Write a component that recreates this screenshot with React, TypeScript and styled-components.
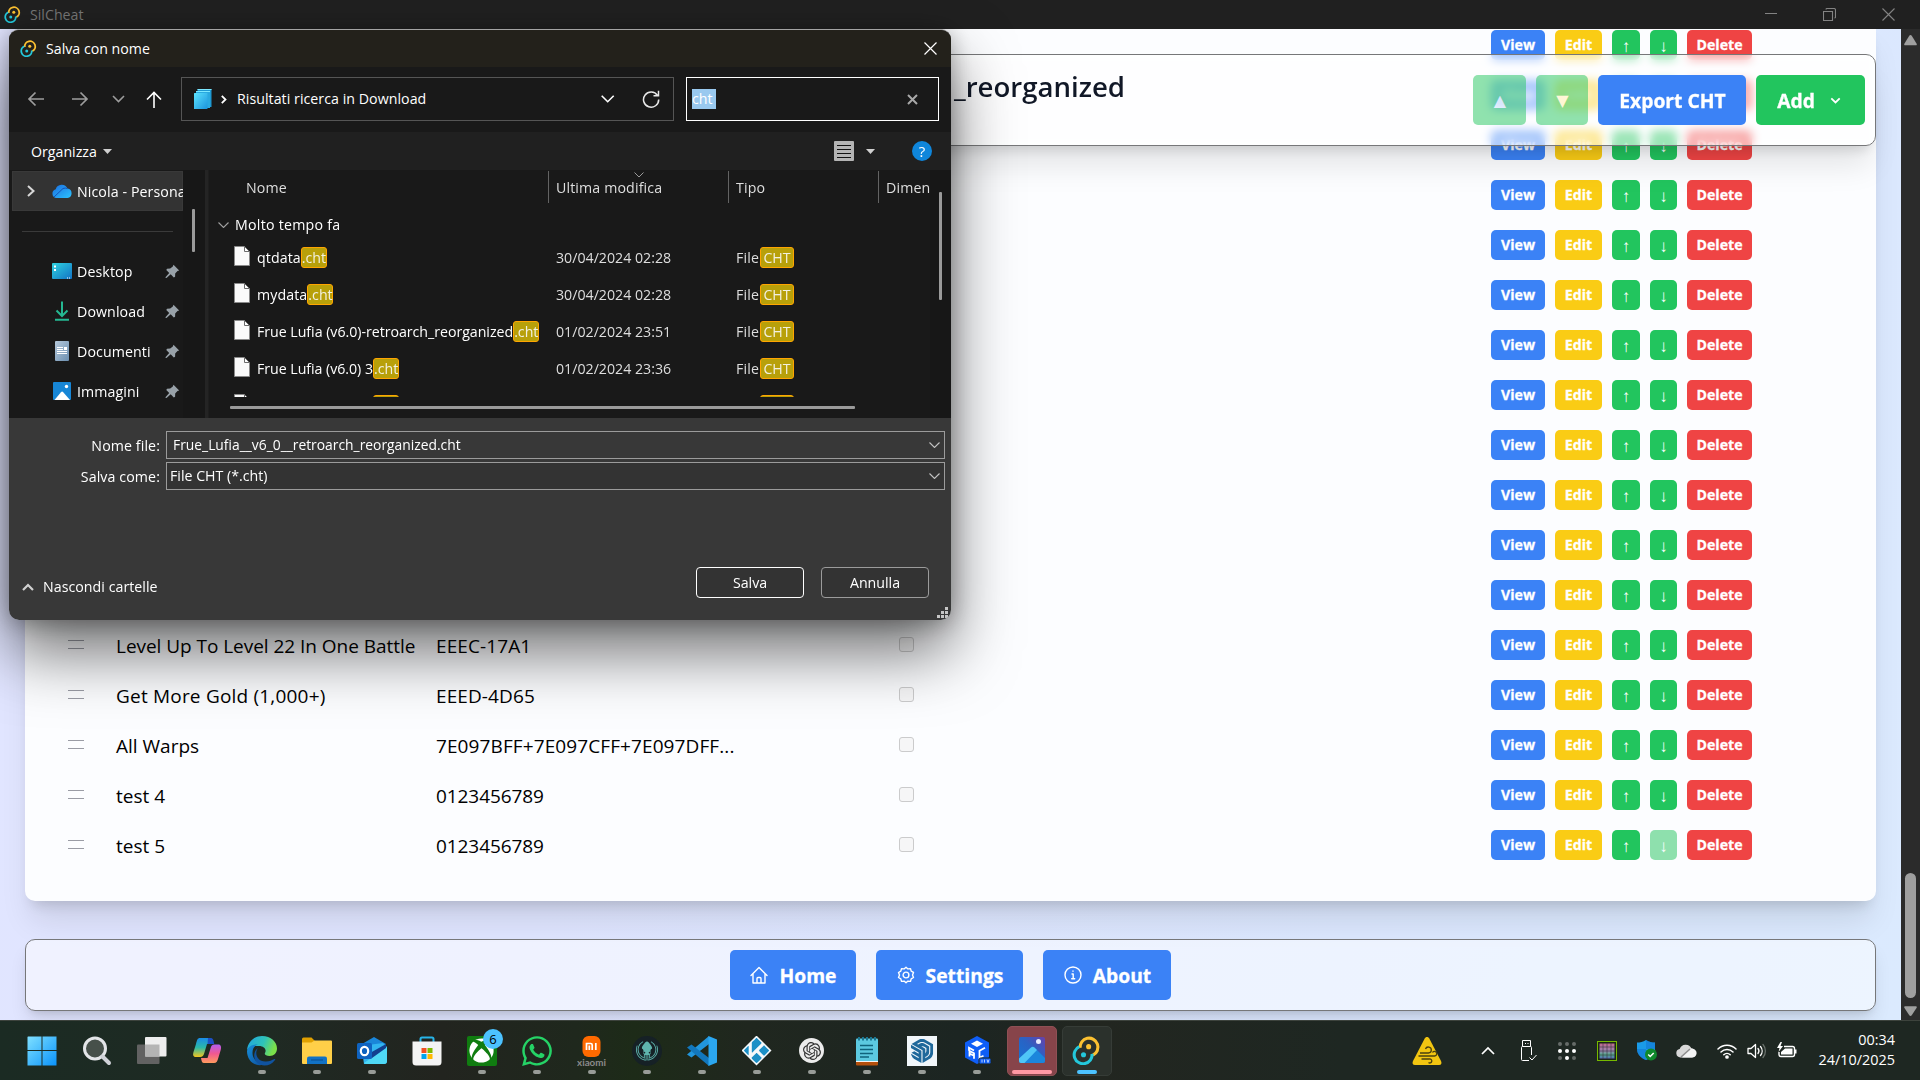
import React from 'react';
import styled, { createGlobalStyle, css } from 'styled-components';
import { SiOpenai, SiSketchup, SiKodi, SiGitkraken } from 'react-icons/si';
import { FaXbox, FaWhatsapp } from 'react-icons/fa';

const GlobalStyle = createGlobalStyle`
  *, *::before, *::after { box-sizing: border-box; }
  html, body { margin: 0; padding: 0; overflow: hidden; }
  body { font-family: "Open Sans", "Noto Sans", sans-serif; }
  svg { display: block; flex: none; }
`;

/* ---------- shell ---------- */

const Screen = styled.div`
  position: relative;
  width: 1920px;
  height: 1080px;
  display: flex;
  flex-direction: column;
  overflow: hidden;
  background: #202020;
`;

const WindowBar = styled.header`
  height: 29px;
  flex: none;
  display: flex;
  align-items: center;
  padding: 0 25px 0 4px;
  background: #202020;
  color: #767676;
  font-size: 14.2px;
`;

const AppName = styled.span`
  margin-left: 9px;
  line-height: 20px;
  flex: 1;
`;

const WindowControls = styled.div`
  display: flex;
  gap: 46px;
`;

const Body = styled.div`
  height: 991px;
  flex: none;
  display: flex;
`;

const Page = styled.main`
  position: relative;
  width: 1901px;
  overflow: hidden;
  display: flex;
  flex-direction: column;
  padding: 0 25px;
  background: linear-gradient(115deg, #e2e5ff 0%, #dfe5ff 40%, #dbe7fe 75%, #dbeafe 100%);
`;

const ScrollTrack = styled.div`
  width: 19px;
  display: flex;
  flex-direction: column;
  align-items: center;
  justify-content: space-between;
  padding: 6px 0 4px;
  background: #2b2b2b;
`;

const ScrollThumb = styled.div`
  width: 11px;
  height: 125px;
  margin-top: auto;
  margin-bottom: 8px;
  border-radius: 6px;
  background: #9f9f9f;
`;

/* ---------- cheats card ---------- */

const Card = styled.section`
  height: 881px;
  flex: none;
  margin-top: -9px;
  border-radius: 10px;
  background: #fcfdff;
  box-shadow: 0 25px 31px -6px rgba(0, 0, 0, 0.1), 0 10px 13px -7px rgba(0, 0, 0, 0.14);
`;

const CheatRow = styled.div`
  height: 50px;
  display: grid;
  grid-template-columns: 91px 320px 463px 592px 300px;
  align-items: center;
  color: #000;
  font-size: 19px;
  white-space: nowrap;
`;

const CheatText = styled.span<{ $ls?: number }>`
  letter-spacing: ${(p) => p.$ls ?? 0}px;
  padding-top: 1px;
`;

const Handle = styled.span`
  display: block;
  width: 16px;
  height: 9px;
  margin: 0 0 1px 43px;
  border-top: 1px solid #9a9ca5;
  border-bottom: 1px solid #9a9ca5;
`;

const CheckBox = styled.span`
  display: block;
  width: 15px;
  height: 15px;
  margin-bottom: 1px;
  border: 1px solid #cbcbcc;
  border-radius: 3px;
  background: #f6f6f7;
`;

const RowActions = styled.div`
  display: flex;
  gap: 10px;
`;

const tones = { blue: '#3b82f6', yellow: '#facc15', green: '#22c55e', red: '#ef4444' };

const SmallButton = styled.button<{ $tone: keyof typeof tones; $w: number; $off?: boolean }>`
  width: ${(p) => p.$w}px;
  height: 30px;
  padding: 0;
  border: 0;
  border-radius: 5px;
  background: ${(p) => tones[p.$tone]};
  opacity: ${(p) => (p.$off ? 0.5 : 1)};
  color: #fff;
  font: 700 14.2px "Open Sans", "Noto Sans", sans-serif;
  line-height: 30px;
  text-align: center;
  -webkit-text-stroke: 0.3px #fff;
`;

const MoveArrow = styled.span`
  display: block;
  font-size: 17px;
  line-height: 29px;
  font-weight: 400;
  -webkit-text-stroke: 0;
`;

const PageHeader = styled.header`
  position: absolute;
  left: 25px;
  top: 25px;
  width: 1851px;
  height: 92px;
  display: flex;
  justify-content: flex-end;
  padding: 9px 10px;
  border: 1px solid #767779;
  border-radius: 10px;
  background: rgba(255, 255, 255, 0.55);
  backdrop-filter: blur(5px);
  box-shadow: 0 25px 31px -6px rgba(0, 0, 0, 0.1), 0 10px 13px -7px rgba(0, 0, 0, 0.14);
`;

const PageTitle = styled.h1`
  margin: 2px 348px 0 0;
  color: #111827;
  font-size: 27.6px;
  font-weight: 600;
  line-height: 40px;
`;

const HeaderActions = styled.div`
  display: flex;
  gap: 10px;
  margin-top: 11px;
`;

const BigButton = styled.button<{ $tone: keyof typeof tones; $w: number; $off?: boolean; $pr?: number }>`
  width: ${(p) => p.$w}px;
  height: 50px;
  padding: 0 ${(p) => p.$pr ?? 0}px 0 1px;
  border: 0;
  border-radius: 5px;
  display: flex;
  align-items: center;
  justify-content: center;
  background: ${(p) => tones[p.$tone]};
  opacity: ${(p) => (p.$off ? 0.5 : 1)};
  color: #fff;
  font: 700 19.3px "Open Sans", "Noto Sans", sans-serif;
`;

const ArrowGlyph = styled.span`
  font: 16px "DejaVu Sans", sans-serif;
`;

const Label = styled.span<{ $ml?: number; $mr?: number }>`
  line-height: 28px;
  padding-top: 2px;
  margin-left: ${(p) => p.$ml ?? 0}px;
  margin-right: ${(p) => p.$mr ?? 0}px;
  -webkit-text-stroke: 0.3px #fff;
`;

const PageFooter = styled.footer`
  height: 72px;
  flex: none;
  margin-top: 38px;
  display: flex;
  align-items: center;
  justify-content: center;
  gap: 20px;
  border: 1px solid #767779;
  border-radius: 10px;
  background: rgba(255, 255, 255, 0.5);
  box-shadow: 0 12px 19px -4px rgba(0, 0, 0, 0.12), 0 5px 8px -5px rgba(0, 0, 0, 0.15);
`;

/* ---------- save dialog ---------- */

const Dialog = styled.section`
  position: absolute;
  left: 9px;
  top: 29px;
  width: 942px;
  height: 591px;
  display: flex;
  flex-direction: column;
  border-top: 1px solid #a3a3a3;
  border-radius: 10px;
  overflow: hidden;
  background: #383838;
  color: #fff;
  font-size: 14.2px;
  white-space: nowrap;
`;

const DialogShadow = styled.div`
  position: absolute;
  left: 9px;
  top: 30px;
  width: 942px;
  height: 590px;
  border-radius: 10px;
  box-shadow: 0 32px 64px rgba(0, 0, 0, 0.56), 0 2px 22px rgba(0, 0, 0, 0.3);
`;

const DialogTitle = styled.div`
  height: 37px;
  flex: none;
  display: flex;
  align-items: center;
  padding: 0 14px 0 11px;
  background: #23211b;
`;

const TitleText = styled.span`
  flex: 1;
  margin-left: 9px;
  line-height: 20px;
`;

const NavBar = styled.div`
  height: 65px;
  flex: none;
  display: flex;
  align-items: center;
  padding: 0 12px 1px 18px;
  background: #191919;
`;

const NavIcons = styled.div`
  width: 154px;
  display: flex;
  align-items: center;

  svg:nth-child(2) { margin-left: 28px; }
  svg:nth-child(3) { margin-left: 23px; }
  svg:nth-child(4) { margin-left: 21px; }
`;

const AddressBox = styled.div`
  width: 493px;
  height: 44px;
  display: flex;
  align-items: center;
  padding: 0 13px 0 12px;
  border: 1px solid #555;
`;

const CrumbArrow = styled.svg`
  margin-left: 9px;
`;

const AddressText = styled.span`
  margin-left: 10px;
  flex: 1;
  line-height: 20px;
  letter-spacing: 0.04px;
`;

const SearchBox = styled.div`
  width: 253px;
  height: 44px;
  margin-left: 12px;
  display: flex;
  align-items: center;
  justify-content: space-between;
  padding: 0 20px 0 5px;
  border: 1px solid #fff;
`;

const Selection = styled.span`
  width: 24px;
  height: 20px;
  line-height: 20px;
  background: #99c9ef;
`;

const ToolBar = styled.div`
  height: 38px;
  flex: none;
  display: flex;
  align-items: center;
  padding: 0 19px 0 22px;
  background: #202020;
`;

const ToolText = styled.span`
  line-height: 20px;
  margin-right: 6px;
  padding-top: 1px;
`;

const ViewIcon = styled.span`
  width: 20px;
  height: 20px;
  margin-left: auto;
  margin-right: 12px;
  border-radius: 1px;
  padding: 4px 3px 3px;
  display: flex;
  flex-direction: column;
  justify-content: space-between;
  background: #b4b4b4;

  i { height: 1px; background: #111; }
`;

const HelpBadge = styled.span`
  width: 20px;
  height: 20px;
  margin-left: 37px;
  border-radius: 50%;
  background: #0f86db;
  font-size: 15px;
  line-height: 20px;
  text-align: center;
`;

const Panes = styled.div`
  height: 248px;
  flex: none;
  display: flex;
  background: #191919;
`;

const Tree = styled.nav`
  width: 174px;
  padding: 1px 0 0 3px;
`;

const TreeItem = styled.div<{ $active?: boolean }>`
  height: 40px;
  display: flex;
  align-items: center;
  overflow: hidden;
  ${(p) => p.$active && css`background: #333; box-shadow: inset 0 0 0 1px #393939;`}
  padding-left: ${(p) => (p.$active ? 15 : 40)}px;
  padding-right: ${(p) => (p.$active ? 0 : 3)}px;
`;

const TreeIcon = styled.span`
  width: 20px;
  display: flex;
  justify-content: center;
`;

const CloudIcon = styled.svg`
  margin-left: 17px;
`;

const TreeText = styled.span`
  margin-left: 5px;
  padding-top: 1px;
  flex: 1;
  line-height: 21px;
  letter-spacing: 0.1px;
`;

const TreeRule = styled.div`
  height: 1px;
  margin: 20px 10px 19px;
  background: #3a3a3a;
`;

const TreeScroll = styled.div`
  width: 22px;
  padding: 39px 0 0 9px;
  background: #171717;
`;

const Bar = styled.div<{ $w: number; $h: number }>`
  width: ${(p) => p.$w}px;
  height: ${(p) => p.$h}px;
  border-radius: 1px;
  background: #9a9a9a;
`;

const Splitter = styled.div`
  width: 4px;
  background: #242424;
  border-right: 1px solid #1e1e1e;
`;

const Files = styled.div`
  width: 721px;
  display: flex;
  flex-direction: column;
`;

const FilesHead = styled.div`
  height: 34px;
  flex: none;
  display: grid;
  grid-template-columns: 339px 180px 150px 52px;
  color: #dedede;
  padding-top: 1px;
`;

const HeadCell = styled.div<{ $pl: number; $first?: boolean }>`
  position: relative;
  height: 32px;
  padding-left: ${(p) => p.$pl}px;
  overflow: hidden;
  line-height: 33px;
  letter-spacing: 0.13px;
  border-left: ${(p) => (p.$first ? 0 : '1px solid #636363')};
`;

const SortMark = styled.svg`
  position: absolute;
  left: 85px;
  top: 1px;
`;

const FilesScroll = styled.div`
  height: 193px;
  flex: none;
  overflow: hidden;
`;

const GroupRow = styled.div`
  height: 35px;
  display: flex;
  align-items: center;
  gap: 6px;
  padding: 7px 0 0 9px;
  line-height: 20px;
  letter-spacing: 0.25px;
`;

const FileRow = styled.div`
  height: 37px;
  display: grid;
  grid-template-columns: 48px 299px 180px 1fr;
  align-items: center;
  color: #dedede;
`;

const FileIcon = styled.span`
  padding-left: 25px;
  margin-top: -3px;
`;

const Cell = styled.span<{ $bright?: boolean }>`
  display: flex;
  align-items: center;
  line-height: 20px;
  color: ${(p) => (p.$bright ? '#fff' : '#dedede')};
`;

const FileName = styled.span<{ $ls: number }>`
  letter-spacing: ${(p) => p.$ls}px;
`;

const FileKind = styled.span`
  width: 24px;
  letter-spacing: 0.2px;
`;

const Mark = styled.mark<{ $w: number; $ml?: number }>`
  width: ${(p) => p.$w}px;
  height: 21px;
  margin-left: ${(p) => p.$ml ?? 0}px;
  flex: none;
  text-align: center;
  line-height: 20px;
  border: 1px solid #ffa500;
  border-radius: 3px;
  background: #b8a00a;
  color: #f2f0e0;
`;

const HTrack = styled.div`
  padding: 9px 0 0 21px;
`;

const FilesVScroll = styled.div`
  width: 21px;
  padding: 22px 0 0 9px;
  background: #171717;
`;

const Form = styled.div`
  flex: 1;
  display: flex;
  flex-direction: column;
  padding: 13px 6px 0 10px;
`;

const Field = styled.div`
  height: 28px;
  display: flex;
  margin-bottom: 3px;
`;

const FieldLabel = styled.label`
  width: 147px;
  padding-right: 6px;
  text-align: right;
  line-height: 29px;
  letter-spacing: 0.1px;
`;

const FieldBox = styled.div<{ $fill?: string; $pl: number }>`
  flex: 1;
  display: flex;
  align-items: center;
  justify-content: space-between;
  padding: 0 4px 0 ${(p) => p.$pl}px;
  border: 1px solid #9b9b9b;
  background: ${(p) => p.$fill ?? '#383838'};
  line-height: 20px;
`;

const FileNameText = styled.span`
  font-size: 13.85px;
  padding-bottom: 1px;
`;

const FormFooter = styled.div`
  flex: 1;
  display: flex;
  align-items: flex-end;
  justify-content: space-between;
  padding: 0 16px 21px 3px;
`;

const HideFolders = styled.div`
  display: flex;
  align-items: center;
  gap: 9px;
  line-height: 20px;
  margin-bottom: 2px;
  letter-spacing: 0.04px;
`;

const DialogButtons = styled.div`
  display: flex;
  gap: 17px;
  padding-bottom: 1px;
`;

const DialogButton = styled.button<{ $primary?: boolean }>`
  width: 108px;
  height: 31px;
  padding: 0 0 1px;
  border: 1px solid ${(p) => (p.$primary ? '#fff' : '#9b9b9b')};
  border-radius: 4px;
  background: #333;
  color: #fff;
  font: 14.2px "Open Sans", "Noto Sans", sans-serif;
`;

const Grip = styled.svg`
  position: absolute;
  right: 3px;
  bottom: 2px;
`;

/* ---------- taskbar ---------- */

const Taskbar = styled.footer`
  height: 60px;
  flex: none;
  display: flex;
  border-top: 1px solid #3d433d;
  background: linear-gradient(90deg, #1b2b23 0%, #1f2a23 14%, #22241f 23%, #1f281d 30%, #1d2b18 33%, #20271f 39%, #1c2522 50%, #222620 57%, #1e2722 70%, #1e2722 100%);
`;

const Apps = styled.div`
  width: 1100px;
  margin-left: 14px;
  flex: none;
  display: flex;
`;

const AppSlot = styled.div`
  position: relative;
  width: 55px;
  height: 59px;
  display: flex;
  align-items: center;
  justify-content: center;
`;

const AppTile = styled.div<{ $bg?: string; $line?: string }>`
  width: 50px;
  height: 50px;
  display: flex;
  align-items: center;
  justify-content: center;
  border-radius: 5px;
  background: ${(p) => p.$bg ?? 'transparent'};
  border: 1px solid ${(p) => p.$line ?? 'transparent'};
`;

const LogoPlate = styled.span<{ $bg: string; $c: string; $size: number; $r?: string }>`
  width: ${(p) => p.$size}px;
  height: ${(p) => p.$size}px;
  display: flex;
  align-items: center;
  justify-content: center;
  border-radius: ${(p) => p.$r ?? '50%'};
  background: ${(p) => p.$bg};
  color: ${(p) => p.$c};
`;

const KodiPlate = styled.span`
  width: 30px;
  height: 30px;
  display: flex;
  align-items: center;
  justify-content: center;
  background: #f4f8fa;
  clip-path: polygon(50% 0, 100% 50%, 50% 100%, 0 50%);
  color: #1b8fc6;
`;

const Running = styled.span<{ $w?: number; $c?: string }>`
  position: absolute;
  left: 50%;
  bottom: 6px;
  width: ${(p) => p.$w ?? 8}px;
  height: 4px;
  transform: translateX(-50%);
  border-radius: 2px;
  background: ${(p) => p.$c ?? '#989c98'};
`;

const Badge = styled.span`
  position: absolute;
  left: 29px;
  top: 8px;
  width: 20px;
  height: 20px;
  border-radius: 50%;
  background: #4cc2ff;
  color: #000;
  font-size: 13px;
  line-height: 20px;
  text-align: center;
`;

const Tray = styled.div`
  flex: 1;
  display: flex;
  align-items: center;
  justify-content: flex-end;
  padding-right: 25px;
`;

const TrayItem = styled.span<{ $w: number; $ml: number }>`
  width: ${(p) => p.$w}px;
  margin-left: ${(p) => p.$ml}px;
  display: flex;
  justify-content: center;
`;

const Clock = styled.div`
  width: 98px;
  padding-bottom: 2px;
  color: #fff;
  font-size: 14.4px;
  line-height: 20px;
  text-align: right;
`;

/* ---------- small drawings ---------- */

const Tauri = ({ s = 17 }: { s?: number }) => (
  <svg width={s} height={s} viewBox="0 0 34 34" fill="none" strokeWidth="3.600">
    <path d="M9.500 14A10.500 10.500 0 1 1 24.500 22.500" stroke="#fcc131" />
    <path d="M24.500 20A10.500 10.500 0 1 1 9.500 11.500" stroke="#24c8db" transform="translate(-1 1)" />
    <circle cx="19.500" cy="12.500" r="3" fill="#fcc131" />
    <circle cx="13.500" cy="22" r="3" fill="#24c8db" />
  </svg>
);

const Chevron = ({ d, w, h, c = '#fff', sw = 1.5 }: { d: string; w: number; h: number; c?: string; sw?: number }) => (
  <svg width={w} height={h} viewBox={`0 0 ${w} ${h}`} fill="none" stroke={c} strokeWidth={sw}>
    <path d={d} />
  </svg>
);

const Caret = ({ c = '#d0d0d0' }) => (
  <svg width="9" height="5" viewBox="0 0 9 5"><path d="M0 0h9L4.500 5z" fill={c} /></svg>
);

const SheetIcon = () => (
  <svg width="16" height="20" viewBox="0 0 16 20">
    <path d="M.5.5h10l5 5v14H.5z" fill="#fafafa" stroke="#8a8a8a" />
    <path d="M10.500.5v5h5z" fill="#fff" stroke="#6b6b6b" />
  </svg>
);

const Pin = () => (
  <svg width="15" height="15" viewBox="0 0 15 15" fill="#98a1a8">
    <path d="M8.500.8l5.700 5.600-1.700.7-2.300 2.500-.1 3.200-1.300.6-3.100-3.100L1.500 14l-1-.1.200-1L4.200 9 1.300 6l.7-1.300 3.200-.1L7.800 2.500z" />
  </svg>
);

const treeItems = [
  {
    name: 'Desktop',
    icon: (
      <svg width="20" height="16" viewBox="0 0 20 16">
        <defs><linearGradient id="dk" x1="0" y1="0" x2="1" y2="1"><stop offset="0" stopColor="#2fd3e0" /><stop offset="1" stopColor="#1272c4" /></linearGradient></defs>
        <rect width="20" height="16" rx="1" fill="url(#dk)" />
        <path d="M2 2.500h2v2H2zM2 6h2v2H2z" fill="#fff" /><path d="M15 15h1M17 15h1" stroke="#fff" />
      </svg>
    ),
  },
  {
    name: 'Download',
    icon: (
      <svg width="14" height="20" viewBox="0 0 14 20" fill="none" stroke="#25b892" strokeWidth="2">
        <path d="M7 .5v14M1.500 9.500L7 15l5.500-5.500M0 18.700h14" />
      </svg>
    ),
  },
  {
    name: 'Documenti',
    icon: (
      <svg width="14" height="20" viewBox="0 0 14 20">
        <defs><linearGradient id="dc" x1="0" y1="0" x2="1" y2="1"><stop offset="0" stopColor="#b5c8da" /><stop offset="1" stopColor="#6c8fb0" /></linearGradient></defs>
        <rect width="14" height="20" rx="1" fill="url(#dc)" />
        <path d="M2 6.500h6M2 8.500h6M2 10.500h10M2 12.500h10" stroke="#fff" /><path d="M9 6h3v3H9z" fill="#fff" />
      </svg>
    ),
  },
  {
    name: 'Immagini',
    icon: (
      <svg width="18" height="18" viewBox="0 0 18 18">
        <rect width="18" height="18" rx="1" fill="#1786d6" />
        <path d="M1.500 18L8 10.200a1.500 1.500 0 0 1 2.200 0L17 18z" fill="#fff" /><circle cx="13.500" cy="4.500" r="1.700" fill="#fff" />
      </svg>
    ),
  },
];

const files = [
  { name: 'qtdata', date: '30/04/2024 02:28', ls: 0.1 },
  { name: 'mydata', date: '30/04/2024 02:28', ls: 0.1 },
  { name: 'Frue Lufia (v6.0)-retroarch_reorganized', date: '01/02/2024 23:51', ls: -0.03 },
  { name: 'Frue Lufia (v6.0) 3', date: '01/02/2024 23:36', ls: -0.04 },
];

const cheats: { name: string; code: string; ls?: number; cls?: number }[] = [
  ...Array.from({ length: 12 }, () => ({ name: '', code: '' })),
  { name: 'Level Up To Level 22 In One Battle', code: 'EEEC-17A1', ls: -0.04, cls: 0.1 },
  { name: 'Get More Gold (1,000+)', code: 'EEED-4D65', ls: 0.2, cls: 0.1 },
  { name: 'All Warps', code: '7E097BFF+7E097CFF+7E097DFF...', cls: 0.1 },
  { name: 'test 4', code: '0123456789', cls: -0.08 },
  { name: 'test 5', code: '0123456789', cls: -0.08 },
];

const apps: { id: string; running?: boolean; icon: React.ReactNode }[] = [
  {
    id: 'start',
    icon: (
      <svg width="30" height="30" viewBox="0 0 30 30">
        <defs><linearGradient id="wn" x1="0" y1="0" x2="1" y2="1"><stop offset="0" stopColor="#7fe0ff" /><stop offset="1" stopColor="#0a93fb" /></linearGradient></defs>
        <path d="M1 .5h13.500V14H.5V1zM15.500.5h14V14h-14zM.5 15h14v14.500H.5zM15.500 15h14v14.500h-14z" fill="url(#wn)" />
      </svg>
    ),
  },
  {
    id: 'search',
    icon: (
      <svg width="30" height="30" viewBox="0 0 30 30" fill="none">
        <circle cx="13" cy="12.500" r="10.500" fill="#46504a" stroke="#e3e5e8" strokeWidth="3" />
        <path d="M20.500 20.500l6.500 6.500" stroke="#d0d2d8" strokeWidth="4" strokeLinecap="round" />
      </svg>
    ),
  },
  {
    id: 'tasks',
    icon: (
      <svg width="30" height="30" viewBox="0 0 30 30">
        <rect x="0" y="8.500" width="22.500" height="19.500" rx="1" fill="#626262" />
        <rect x="8" y="1" width="21.500" height="19.500" rx="1" fill="#eee" />
        <path d="M8 8.500h14.500v12H8z" fill="#b4b4b4" />
      </svg>
    ),
  },
  {
    id: 'copilot',
    icon: (
      <svg width="30" height="30" viewBox="0 0 30 30">
        <defs>
          <linearGradient id="c1" x1="0" y1="0" x2="0" y2="1"><stop offset="0" stopColor="#1a8ce8" /><stop offset=".5" stopColor="#2bb9a8" /><stop offset="1" stopColor="#f4c51c" /></linearGradient>
          <linearGradient id="c2" x1="0" y1="0" x2="0" y2="1"><stop offset="0" stopColor="#b55cf0" /><stop offset=".5" stopColor="#f2588f" /><stop offset="1" stopColor="#ff9b5e" /></linearGradient>
        </defs>
        <path d="M18 2h-10C5.500 2 5 4 4 8L1.500 16c-1 3.500 0 5 2.500 5h4c2.500 0 3.500-1.500 4.300-4l2.700-9h6C20.500 5 20 2 18 2z" fill="url(#c1)" />
        <path d="M16 2h3c2 0 2.500 2 3.200 6h-6.700z" fill="#1d4fc4" />
        <path d="M12 27h10c2.500 0 3.500-2 4.300-5l2.400-8c1-3.500 0-5.500-2.700-5.500h-3.500c-2.500 0-3.300 1.500-4 4L15.500 22H9c.5 3 1 5 3 5z" fill="url(#c2)" />
      </svg>
    ),
  },
  {
    id: 'edge',
    running: true,
    icon: (
      <svg width="32" height="32" viewBox="0 0 32 32">
        <defs>
          <linearGradient id="e1" x1="0" y1="0" x2="1" y2=".3"><stop offset="0" stopColor="#1fa5e4" /><stop offset=".6" stopColor="#2fc3b8" /><stop offset="1" stopColor="#7be04a" /></linearGradient>
          <linearGradient id="e2" x1="0" y1="0" x2="1" y2="1"><stop offset="0" stopColor="#1791dc" /><stop offset="1" stopColor="#0d4a98" /></linearGradient>
        </defs>
        <path d="M1 15C2 6 9 1 16 1c9 0 15 6 15 12.500C31 18 28 21 23.500 21 20 21 18 19.700 19 18c2-3.500-1-7-6-7C8 10.500 3 12 1 15z" fill="url(#e1)" />
        <path d="M1 16c1-5 6-7 11-6.500-4 1-5.500 4.500-5.500 8.500 0 6 5.500 11.500 13.500 10.500C11 33.500 1 27 1 16z" fill="url(#e2)" />
        <path d="M12 13c-4 5-1 14 8 13.500 3.500 0 6-1.500 8.500-2.500.7-.2 1 .3.500 1C24 32 15 32 10.500 27 7 23 7.500 16 12 13z" fill="#10539f" />
      </svg>
    ),
  },
  {
    id: 'files',
    running: true,
    icon: (
      <svg width="30" height="28" viewBox="0 0 30 28">
        <path d="M0 2a1.500 1.500 0 0 1 1.500-1.500h8L13 4v5H0z" fill="#e0a000" />
        <path d="M0 5.500h9.500l3-2H29a1 1 0 0 1 1 1V26a1 1 0 0 1-1 1H1a1 1 0 0 1-1-1z" fill="#ffcf48" />
        <path d="M5 27v-5.500a2 2 0 0 1 2-2h16a2 2 0 0 1 2 2V27z" fill="#1272c4" /><path d="M9 23h12" stroke="#0b4c8c" />
      </svg>
    ),
  },
  {
    id: 'outlook',
    running: true,
    icon: (
      <svg width="32" height="30" viewBox="0 0 32 30">
        <path d="M6 8L18 1l12 7v6H6z" fill="#1a86d9" /><path d="M12 9l15-2 4 4v14a3 3 0 0 1-3 3H8L6 14z" fill="#32b5f0" />
        <path d="M31 11L8 27a3 3 0 0 0 2 1h18a3 3 0 0 0 3-3z" fill="#4fd8f5" /><path d="M14 17L30 8v4L16 22z" fill="#123f8f" />
        <rect x="1" y="7" width="15" height="16" rx="1.500" fill="#0f63c0" /><ellipse cx="8.500" cy="15" rx="3.700" ry="4.200" fill="none" stroke="#fff" strokeWidth="2.200" />
      </svg>
    ),
  },
  {
    id: 'store',
    icon: (
      <svg width="30" height="30" viewBox="0 0 30 30">
        <path d="M8.500 7V3a1.500 1.500 0 0 1 1.500-1.500h10A1.500 1.500 0 0 1 21.500 3v4" fill="none" stroke="#27b4e8" strokeWidth="2" />
        <path d="M.5 5.500h29V26a3.500 3.500 0 0 1-3.500 3.500H4A3.500 3.500 0 0 1 .5 26z" fill="#f4f4f4" />
        <path d="M9.500 12h5v5h-5z" fill="#f25022" /><path d="M15.500 12h5v5h-5z" fill="#7fba00" /><path d="M9.500 18h5v5h-5z" fill="#00a4ef" /><path d="M15.500 18h5v5h-5z" fill="#ffb900" />
      </svg>
    ),
  },
  { id: 'xbox', running: true, icon: <LogoPlate $bg="#107c10" $c="#fff" $size={30} $r="2px"><FaXbox size={25} /></LogoPlate> },
  { id: 'whatsapp', running: true, icon: <LogoPlate $bg="transparent" $c="#25d366" $size={34}><FaWhatsapp size={34} /></LogoPlate> },
  {
    id: 'xiaomi',
    running: true,
    icon: (
      <svg width="30" height="32" viewBox="0 0 30 32">
        <rect x="5.500" y="1" width="18" height="21" rx="6" fill="#ff6a00" />
        <path d="M9.500 15V8.500h4.200a1.500 1.500 0 0 1 1.500 1.500v5M12.300 10.500V15M18.800 8v7" fill="none" stroke="#fff" strokeWidth="1.700" />
        <text x="0" y="31" textLength="29" lengthAdjust="spacingAndGlyphs" fontSize="9.500" fontWeight="700" fill="#8a8a8a" fontFamily="Lato, sans-serif">xiaomi</text>
      </svg>
    ),
  },
  { id: 'kraken', running: true, icon: <LogoPlate $bg="#162126" $c="#5fb5ae" $size={30}><SiGitkraken size={22} /></LogoPlate> },
  {
    id: 'code',
    running: true,
    icon: (
      <svg width="30" height="30" viewBox="0 0 30 30">
        <path d="M22 0v8L4.500 21.500 0 18.500z" fill="#2196dd" /><path d="M22 30v-8L4.500 8.500 0 11.500z" fill="#1277bd" />
        <path d="M21.500 0L30 3.500v23L21.500 30z" fill="#2ba7f0" />
      </svg>
    ),
  },
  { id: 'kodi', running: true, icon: <KodiPlate><SiKodi size={25} /></KodiPlate> },
  { id: 'chat', running: true, icon: <LogoPlate $bg="#ececec" $c="#333" $size={25}><SiOpenai size={18} /></LogoPlate> },
  {
    id: 'notepad',
    running: true,
    icon: (
      <svg width="24" height="30" viewBox="0 0 24 30">
        <rect x="1" y="2.500" width="22" height="26" rx="1" fill="#5cc9e0" /><path d="M1 26h22v2.500a1 1 0 0 1-1 1H2a1 1 0 0 1-1-1z" fill="#b4500c" /><path d="M1 25.500h22" stroke="#f4f4f4" />
        <path d="M5 9.500h13M5 13.500h13M5 17.500h13M5 21h9" stroke="#10637c" strokeWidth="1.500" /><path d="M4 1v3.500M8 1v3.500M12 1v3.500M16 1v3.500M20 1v3.500" stroke="#1a7793" strokeWidth="2" />
      </svg>
    ),
  },
  { id: 'sketch', running: true, icon: <LogoPlate $bg="#f1f6fa" $c="#1f689b" $size={30} $r="0"><SiSketchup size={24} /></LogoPlate> },
  {
    id: 'cube',
    running: true,
    icon: (
      <svg width="30" height="30" viewBox="0 0 30 30" fill="none">
        <path d="M15 0l12 6.500v15L15 28 3 21.500v-15z" fill="#0f5ef7" />
        <path d="M15 4.500l6 3.300-6 3.300-6-3.300z" fill="#fff" /><path d="M7.500 20.500v-5.500l4.500 2.300v5.500M7.500 17.500l4.500 2.300M7 14.800v-3l5 2.700M23 11.800l-5.500 3v7l4-2" stroke="#fff" strokeWidth="1.800" />
        <rect x="17" y="22" width="12" height="6" rx="1.500" fill="#0f5ef7" stroke="#1c2721" /><path d="M20 23.500v3M22.500 23.500v3M25 23.500l1 3 1-3" stroke="#dbe8ff" strokeWidth=".8" />
      </svg>
    ),
  },
];

const PhotosIcon = () => (
  <svg width="26" height="27" viewBox="0 0 26 27">
    <defs><linearGradient id="ph" x1="0" y1="1" x2="1" y2="0"><stop offset="0" stopColor="#1474d4" /><stop offset=".55" stopColor="#2a62c4" /><stop offset="1" stopColor="#6a3fa8" /></linearGradient></defs>
    <rect width="26" height="26" rx="2" fill="url(#ph)" />
    <path d="M1.500 24.500L13.500 11.500a2 2 0 0 1 3 0L26 21v3a2 2 0 0 1-2 2H3z" fill="#1b86dc" />
    <path d="M0 21.500L12 10.500a2.500 2.500 0 0 1 3.500 0l2.500 2.500L5.500 26H2a2 2 0 0 1-2-2z" fill="#4fc6f7" /><circle cx="19.500" cy="4.500" r="2.500" fill="#e8edff" />
  </svg>
);

/* ---------- screens ---------- */

const SaveDialog = () => (
  <>
    <DialogShadow />
    <Dialog>
      <DialogTitle>
        <Tauri s={17} />
        <TitleText>Salva con nome</TitleText>
        <Chevron d="M.5.5l12 12M12.500.5l-12 12" w={13} h={13} sw={1.2} />
      </DialogTitle>
      <NavBar>
        <NavIcons>
          <Chevron d="M17 8H2M8.500 1.500L2 8l6.500 6.500" w={17} h={16} c="#9d9d9d" sw={1.7} />
          <Chevron d="M0 8h15M8.500 1.500L15 8l-6.500 6.500" w={17} h={16} c="#9d9d9d" sw={1.7} />
          <Chevron d="M1 1l5.500 5.500L12 1" w={13} h={8} c="#9d9d9d" sw={1.6} />
          <Chevron d="M8 17V1.500M1 8.500l7-7 7 7" w={16} h={17} sw={1.6} />
        </NavIcons>
        <AddressBox>
          <svg width="18" height="20" viewBox="0 0 18 20">
            <defs><linearGradient id="fd" x1="0" y1="0" x2="1" y2="1"><stop offset="0" stopColor="#5ce4ff" /><stop offset="1" stopColor="#1b93dc" /></linearGradient></defs>
            <rect x="3.500" width="14" height="18" fill="#1e9ad4" /><path d="M3.500.5h14" stroke="#7de8ff" /><rect x="2" y="2" width="14" height="17" fill="#2aa9e0" /><path d="M2 2.500h14" stroke="#7de8ff" /><rect y="4" width="13.500" height="16" rx=".5" fill="url(#fd)" />
          </svg>
          <CrumbArrow width="6" height="9" viewBox="0 0 6 9" fill="none" stroke="#fff" strokeWidth="1.800"><path d="M.8.8l3.700 3.700L.8 8.200" /></CrumbArrow>
          <AddressText>Risultati ricerca in Download</AddressText>
          <Chevron d="M.7.7l6 6 6-6" w={14} h={8} sw={1.6} />
          <svg width="45" height="18" viewBox="1 0 45 18" fill="none" stroke="#e8e8e8" strokeWidth="1.500">
            <path d="M43.500 5.500A7.600 7.600 0 1 0 44.700 9.500M44.500.8v4.900h-5" />
          </svg>
        </AddressBox>
        <SearchBox>
          <Selection>cht</Selection>
          <Chevron d="M1 1l9 9M10 1l-9 9" w={11} h={11} c="#a8a8a8" sw={2} />
        </SearchBox>
      </NavBar>
      <ToolBar>
        <ToolText>Organizza</ToolText>
        <Caret />
        <ViewIcon><i /><i /><i /><i /></ViewIcon>
        <Caret />
        <HelpBadge>?</HelpBadge>
      </ToolBar>
      <Panes>
        <Tree>
          <TreeItem $active>
            <Chevron d="M1 1l5.500 5L1 11" w={8} h={12} c="#d8d8d8" sw={2} />
            <CloudIcon width="20" height="14" viewBox="0 0 20 14">
              <defs><linearGradient id="od" x1="0" y1="0" x2="1" y2="1"><stop offset="0" stopColor="#1b6ee0" /><stop offset="1" stopColor="#2cc3ff" /></linearGradient></defs>
              <path d="M4.500 14a4.500 4.500 0 0 1-.8-8.800A6.300 6.300 0 0 1 15.500 4.500 4.800 4.800 0 0 1 15.500 14z" fill="url(#od)" />
              <path d="M2 13L11 4.500a6 6 0 0 1 4.500 0" stroke="#1551b8" fill="none" />
            </CloudIcon>
            <TreeText>Nicola - Persona</TreeText>
          </TreeItem>
          <TreeRule />
          {treeItems.map((t) => (
            <TreeItem key={t.name}>
              <TreeIcon>{t.icon}</TreeIcon>
              <TreeText>{t.name}</TreeText>
              <Pin />
            </TreeItem>
          ))}
        </Tree>
        <TreeScroll><Bar $w={3} $h={43} /></TreeScroll>
        <Splitter />
        <Files>
          <FilesHead>
            <HeadCell $pl={37} $first>Nome</HeadCell>
            <HeadCell $pl={7}>
              Ultima modifica
              <SortMark width="10" height="6" viewBox="0 0 10 6" fill="none" stroke="#9a9a9a"><path d="M.5.5L5 5 9.500.5" /></SortMark>
            </HeadCell>
            <HeadCell $pl={7}>Tipo</HeadCell>
            <HeadCell $pl={7}>Dimen</HeadCell>
          </FilesHead>
          <FilesScroll>
            <GroupRow>
              <Chevron d="M.5.5L5.500 5.500 10.500.5" w={11} h={6} c="#a0a0a0" sw={1.1} />
              Molto tempo fa
            </GroupRow>
            {files.map((f) => (
              <FileRow key={f.name}>
                <FileIcon><SheetIcon /></FileIcon>
                <Cell $bright><FileName $ls={f.ls}>{f.name}</FileName><Mark $w={26}>.cht</Mark></Cell>
                <Cell>{f.date}</Cell>
                <Cell><FileKind>File</FileKind><Mark $w={34}>CHT</Mark></Cell>
              </FileRow>
            ))}
            <FileRow>
              <FileIcon><SheetIcon /></FileIcon>
              <Cell><Mark $w={26} $ml={116} /></Cell>
              <Cell />
              <Cell><Mark $w={34} $ml={24} /></Cell>
            </FileRow>
          </FilesScroll>
          <HTrack><Bar $w={625} $h={3} /></HTrack>
        </Files>
        <FilesVScroll><Bar $w={3} $h={108} /></FilesVScroll>
      </Panes>
      <Form>
        <Field>
          <FieldLabel>Nome file:</FieldLabel>
          <FieldBox $pl={6}>
            <FileNameText>Frue_Lufia__v6_0__retroarch_reorganized.cht</FileNameText>
            <Chevron d="M.5.5l5 5 5-5" w={11} h={6} c="#c4c4c4" sw={1.1} />
          </FieldBox>
        </Field>
        <Field>
          <FieldLabel>Salva come:</FieldLabel>
          <FieldBox $pl={3} $fill="#333">
            File CHT (*.cht)
            <Chevron d="M.5.5l5 5 5-5" w={11} h={6} c="#c4c4c4" sw={1.1} />
          </FieldBox>
        </Field>
        <FormFooter>
          <HideFolders>
            <Chevron d="M1 7l5-5 5 5" w={12} h={8} c="#d0d0d0" sw={2.2} />
            Nascondi cartelle
          </HideFolders>
          <DialogButtons>
            <DialogButton $primary>Salva</DialogButton>
            <DialogButton>Annulla</DialogButton>
          </DialogButtons>
        </FormFooter>
      </Form>
      <Grip width="11" height="11" viewBox="0 0 11 11" fill="#c6c6c6">
        <path d="M8 0h3v3H8zM4 4h3v3H4zM8 4h3v3H8zM0 8h3v3H0zM4 8h3v3H4zM8 8h3v3H8z" />
      </Grip>
    </Dialog>
  </>
);

const iconStroke = { fill: 'none', stroke: '#fff', strokeWidth: 1.4, strokeLinecap: 'round' as const, strokeLinejoin: 'round' as const };

export default function App() {
  return (
    <Screen>
      <GlobalStyle />
      <WindowBar>
        <Tauri s={17} />
        <AppName>SilCheat</AppName>
        <WindowControls>
          <Chevron d="M0 5.500h12" w={12} h={13} c="#838383" sw={1} />
          <Chevron d="M.5 3.500h9v9h-9zM3 1.500C3 .8 3.500.5 4 .5h7c1 0 1.500.5 1.500 1.500v7c0 .5-.5 1-1 1" w={13} h={13} c="#838383" sw={1.1} />
          <Chevron d="M.5.500l12 12M12.500.5l-12 12" w={13} h={13} c="#838383" sw={1.1} />
        </WindowControls>
      </WindowBar>
      <Body>
        <Page>
          <Card>
            {cheats.map((c, i) => (
              <CheatRow key={i}>
                <Handle />
                <CheatText $ls={c.ls}>{c.name}</CheatText>
                <CheatText $ls={c.cls}>{c.code}</CheatText>
                <CheckBox />
                <RowActions>
                  <SmallButton $tone="blue" $w={54}>View</SmallButton>
                  <SmallButton $tone="yellow" $w={47}>Edit</SmallButton>
                  <SmallButton $tone="green" $w={28}><MoveArrow>↑</MoveArrow></SmallButton>
                  <SmallButton $tone="green" $w={27} $off={i === cheats.length - 1}><MoveArrow>↓</MoveArrow></SmallButton>
                  <SmallButton $tone="red" $w={65}>Delete</SmallButton>
                </RowActions>
              </CheatRow>
            ))}
          </Card>
          <PageHeader>
            <PageTitle>_reorganized</PageTitle>
            <HeaderActions>
              <BigButton $tone="green" $w={53} $off><ArrowGlyph>▲</ArrowGlyph></BigButton>
              <BigButton $tone="green" $w={52} $off><ArrowGlyph>▼</ArrowGlyph></BigButton>
              <BigButton $tone="blue" $w={148}><Label>Export CHT</Label></BigButton>
              <BigButton $tone="green" $w={109} $pr={4}>
                <Label $mr={15}>Add</Label>
                <Chevron d="M1.300 1.300l4.200 4.200 4.200-4.200" w={11} h={7} sw={1.8} />
              </BigButton>
            </HeaderActions>
          </PageHeader>
          <PageFooter>
            <BigButton $tone="blue" $w={126}>
              <svg width="18" height="18" viewBox="0 0 18 18" {...iconStroke}><path d="M1 9.500L9 1.500l8 8M3 8v9h12V8M7 17v-4.500a1 1 0 0 1 1-1h2a1 1 0 0 1 1 1V17" /></svg>
              <Label $ml={11}>Home</Label>
            </BigButton>
            <BigButton $tone="blue" $w={147}>
              <svg width="18" height="18" viewBox="0 0 18 18" {...iconStroke}>
                <path d="M9 1.200l1.900 1.700 2.600-.3.700 2.500 2.300 1.300L15.500 9l1 2.500-2.300 1.400-.7 2.500-2.600-.3L9 16.800l-1.900-1.700-2.600.3-.7-2.500-2.300-1.400L2.500 9l-1-2.500 2.300-1.400.7-2.500 2.600.3z" />
                <circle cx="9" cy="9" r="2.900" />
              </svg>
              <Label $ml={11}>Settings</Label>
            </BigButton>
            <BigButton $tone="blue" $w={128}>
              <svg width="18" height="18" viewBox="0 0 18 18" {...iconStroke}><circle cx="9" cy="9" r="8" /><path d="M8 8h1.200v4.500M7.700 12.700h3M9 5v.3" /></svg>
              <Label $ml={11}>About</Label>
            </BigButton>
          </PageFooter>
        </Page>
        <ScrollTrack>
          <svg width="13" height="11" viewBox="0 0 13 11"><path d="M6.500 0c.6 0 1 .4 1.400 1l4.600 7.500c.7 1.200.2 1.800-1 1.800H1.500C.3 10.300-.2 9.700.5 8.500L5.100 1c.4-.6.8-1 1.400-1z" fill="#9f9f9f" /></svg>
          <ScrollThumb />
          <svg width="13" height="10" viewBox="0 0 13 10"><path d="M6.500 10c-.6 0-1-.4-1.400-1L.5 2C-.2.800.3.200 1.500.2h10c1.200 0 1.700.6 1 1.800L7.900 9c-.4.6-.8 1-1.400 1z" fill="#9f9f9f" /></svg>
        </ScrollTrack>
      </Body>
      <Taskbar>
        <Apps>
          {apps.map((a) => (
            <AppSlot key={a.id}>
              <AppTile>{a.icon}</AppTile>
              {a.running && <Running />}
              {a.id === 'xbox' && <Badge>6</Badge>}
            </AppSlot>
          ))}
          <AppSlot><AppTile $bg="#87444a" $line="#8f5055"><PhotosIcon /></AppTile><Running $w={40} $c="#ff99a4" /></AppSlot>
          <AppSlot><AppTile $bg="#2b312c" $line="#363c37"><Tauri s={29} /></AppTile><Running $w={20} $c="#4cc2ff" /></AppSlot>
        </Apps>
        <Tray>
          <TrayItem $w={30} $ml={0}>
            <svg width="30" height="28" viewBox="0 0 30 28" fill="none">
              <path d="M15 0c1 0 1.700.5 2.300 1.500L29 24c1 2.200.5 4-2 4H3C.5 28 0 26.200 1 24L12.700 1.500C13.300.5 14 0 15 0z" fill="#f2c511" />
              <path d="M8 16h8.500a3 3 0 1 0-3-4M6.500 19h16a2.300 2.300 0 1 0-2-3.500M9.500 22h8a2 2 0 1 1-1 3.500" stroke="#4a4010" strokeWidth="1.300" />
            </svg>
          </TrayItem>
          <TrayItem $w={14} $ml={39}><Chevron d="M1 8l6-6 6 6" w={14} h={10} sw={1.7} /></TrayItem>
          <TrayItem $w={16} $ml={26}>
            <svg width="16" height="21" viewBox="0 0 16 21" fill="none" stroke="#fff">
              <path d="M10.500 15V7.500a1 1 0 0 0-1-1h-8a1 1 0 0 0-1 1v12a1 1 0 0 0 1 1H8M1.500 6.500v-6h8v6M4 3.500h1M6.500 3.500h1M8.500 17.500l2.500 2.500 4.500-5" />
            </svg>
          </TrayItem>
          <TrayItem $w={20} $ml={20}>
            <svg width="20" height="20" viewBox="0 0 20 20">
              {[0, 1, 2].flatMap((r) => [0, 1, 2].map((c) => (
                <circle key={`${r}${c}`} cx={3 + c * 7} cy={3 + r * 7} r="2" fill={r === 1 || (r === 2 && c === 1) ? '#fff' : '#666b68'} />
              )))}
            </svg>
          </TrayItem>
          <TrayItem $w={20} $ml={20}>
            <svg width="20" height="20" viewBox="0 0 20 20">
              <defs><linearGradient id="gp" x1="0" y1="0" x2="0" y2="1"><stop offset="0" stopColor="#c06a8c" /><stop offset=".5" stopColor="#9a86b0" /><stop offset=".75" stopColor="#4fae8a" /><stop offset="1" stopColor="#5a6ab8" /></linearGradient></defs>
              <rect x=".5" y=".5" width="19" height="19" fill="#1a2414" stroke="#76b900" /><rect x="2.500" y="2.500" width="15" height="15" fill="url(#gp)" />
              <path d="M2 6h16M2 10h16M2 14h16M6 2v16M10 2v16M14 2v16" stroke="#3a3440" strokeOpacity=".6" />
            </svg>
          </TrayItem>
          <TrayItem $w={20} $ml={20}>
            <svg width="20" height="21" viewBox="0 0 20 21">
              <path d="M9 0c3 2 6 2.500 9 2.500V9c0 5.500-4 9-9 11C4 18 0 14.500 0 9V2.500C3 2.500 6 2 9 0z" fill="#1a9be8" /><path d="M9 0v20C4 18 0 14.500 0 9h18V2.500C15 2.500 12 2 9 0z" fill="#0f6fcf" fillOpacity=".5" />
              <circle cx="14" cy="14.500" r="6" fill="#0f8a2c" /><path d="M11.200 14.500l2 2 3.500-3.500" fill="none" stroke="#fff" strokeWidth="1.500" />
            </svg>
          </TrayItem>
          <TrayItem $w={21} $ml={19}>
            <svg width="21" height="14" viewBox="0 0 21 14">
              <path d="M4.500 13.500a4.300 4.300 0 0 1-.8-8.500A6.300 6.300 0 0 1 15.500 4.500a4.600 4.600 0 0 1 .5 9z" fill="#d8d8d8" /><path d="M6 13.500l9-9c4 0 6 2.500 5.500 5.500-.5 2.500-2.500 3.500-4.500 3.500z" fill="#f4f4f4" /><path d="M5 13L14 5" stroke="#8e8e8e" strokeWidth="1.500" />
            </svg>
          </TrayItem>
          <TrayItem $w={20} $ml={20}>
            <svg width="20" height="16" viewBox="0 0 20 16" fill="none" stroke="#fff" strokeWidth="1.500" strokeLinecap="round">
              <path d="M1 6a12.500 12.500 0 0 1 18 0M4 9a8.500 8.500 0 0 1 12 0M6.800 11.800a4.600 4.600 0 0 1 6.400 0" /><circle cx="10" cy="14" r="1.100" fill="#fff" />
            </svg>
          </TrayItem>
          <TrayItem $w={20} $ml={10}>
            <svg width="20" height="16" viewBox="0 0 20 16" fill="none" stroke="#fff" strokeWidth="1.300" strokeLinecap="round" strokeLinejoin="round">
              <path d="M1 5.500h3L8.500 1.500v13L4 10.500H1zM11 5.500a4 4 0 0 1 0 5M13.500 3.500a7 7 0 0 1 0 9" /><path d="M16 1.500a10 10 0 0 1 0 13" stroke="#69706b" />
            </svg>
          </TrayItem>
          <TrayItem $w={20} $ml={10}>
            <svg width="20" height="17" viewBox="0 0 20 17">
              <path d="M7 4.500h8.500a2 2 0 0 1 2 2v6a2 2 0 0 1-2 2H4a2 2 0 0 1-2-2V10" fill="none" stroke="#fff" strokeWidth="1.400" /><path d="M4 12.500V10l4-3.500h7.500v6z" fill="#fff" /><path d="M18 7.500h1.500v4H18zM3.500 0L0 6h2.500L1.500 10 6 4H3.500L5 0z" fill="#fff" />
            </svg>
          </TrayItem>
          <Clock><div>00:34</div><div>24/10/2025</div></Clock>
        </Tray>
      </Taskbar>
      <SaveDialog />
    </Screen>
  );
}
